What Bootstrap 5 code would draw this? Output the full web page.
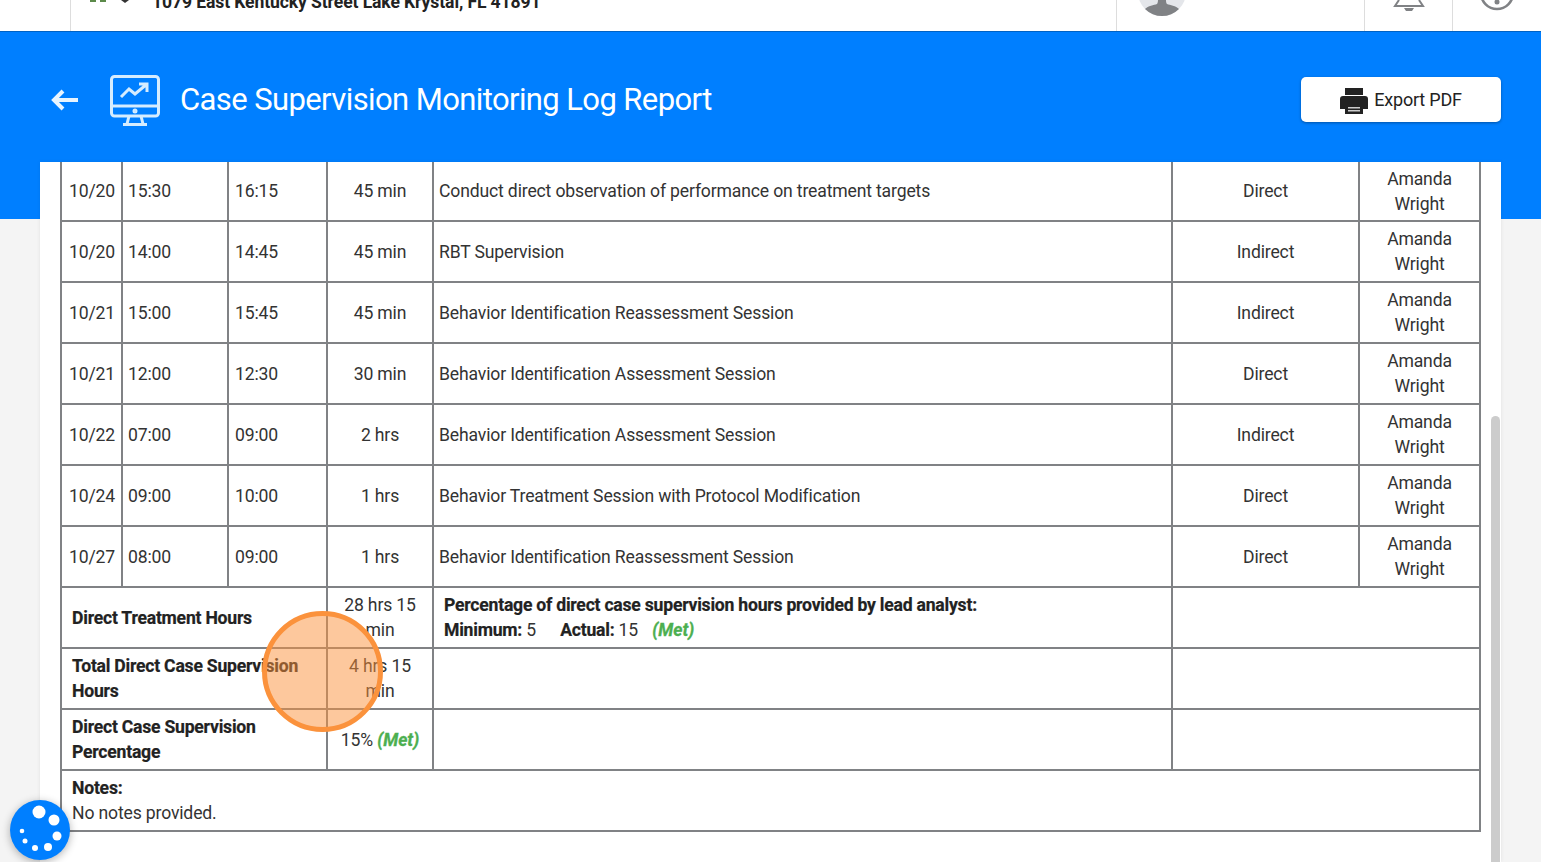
<!DOCTYPE html>
<html lang="en">
<head>
  <meta charset="UTF-8">
  <title>Case Supervision Monitoring Log Report</title>
  <meta name="viewport" content="width=device-width, initial-scale=1">
  <link href="https://cdn.jsdelivr.net/npm/bootstrap@5.3.3/dist/css/bootstrap.min.css" rel="stylesheet">
  <style>
    html, body { height: 862px; overflow: hidden; }
    body { font-family: Roboto, "Liberation Sans", sans-serif; background: #f4f4f4; color: #333; }
    .topbar { height: 32px; background: #fff; border-bottom: 1px solid #0062c4; overflow: hidden; }
    .topcell { height: 31px; border-left: 1px solid #ddd; position: relative; }
    .logo-cell { width: 1046px; margin-left: 70px; }
    .user-cell { width: 248px; }
    .bell-cell { width: 88px; }
    .info-cell { flex: 1; }
    .address { font-size: 17.6px; font-weight: 700; letter-spacing: -.12px; color: #222; margin: -8px 0 0 81px; line-height: 20px; white-space: nowrap; }
    .clip-icon { position: absolute; }
    .headband { height: 130px; background: #007fff; padding: 6px 40px 0 50px; }
    .back-link { margin-right: 30px; }
    .monitor-icon { margin-right: 20px; }
    .report-title { font-size: 31px; font-weight: 400; letter-spacing: -.6px; color: #fff; margin: 0; line-height: 40px; }
    .btn-export { width: 200px; height: 45px; margin-bottom: 2px; gap: 6px; background: #fff; color: #222; font-size: 18px; letter-spacing: -.2px; border: 0; border-radius: 5px; box-shadow: 0 1px 3px rgba(0,0,0,.35); }
    .btn-export:hover { background: #fff; color: #222; }
    .printer-icon { margin-top: 4px; }
    .pagewrap { height: 700px; background: linear-gradient(#007fff 57px, #f4f4f4 57px); padding: 0 40px; }
    .sheet { background: #fff; height: 700px; padding: 0 20px; box-shadow: 0 0 4px rgba(0,0,0,.08); }
    .logtable { width: 1419px; table-layout: fixed; border-collapse: collapse; font-size: 17.6px; line-height: 25px; letter-spacing: -.16px; color: #333; }
    .logtable td { border: 2px solid #808285; padding: 4.5px 5px; vertical-align: middle; }
    .logtable tr:first-child td { border-top: 0; padding-top: 4.5px; padding-bottom: 3.5px; }
    .logtable td.one-line { padding-top: 6.5px; }
    .logtable tr:first-child td.one-line { padding-top: 5.5px; padding-bottom: 4.5px; }
    .logtable td.pad-b { padding-left: 10px; }
    .logtable td.date-cell { padding-left: 7px; padding-right: 0; }
    .logtable td.time-cell { padding-left: 5px; }
    .logtable td.end-cell { padding-left: 6px; }
    .strong-cell { font-weight: 700; letter-spacing: -.23px; color: #222; -webkit-text-stroke: .2px #222; }
    .met-tag { font-weight: 700; font-style: italic; color: #4caf50; -webkit-text-stroke: .3px #4caf50; letter-spacing: 0; }
    .gap-actual { margin-left: 20px; }
    .gap-met { margin-left: 10px; }
    .scroll-thumb { position: fixed; left: 1491px; top: 416px; width: 9px; height: 446px; background: #ccc; border-radius: 5px 5px 0 0; }
    .click-ring { position: fixed; left: 262px; top: 611px; width: 121px; height: 121px; border-radius: 50%; border: 5px solid #fb923c; background: rgba(251,146,60,.5); }
    .cookie-btn { position: fixed; left: 10px; top: 800px; width: 60px; height: 60px; border-radius: 50%; background: #007fff; box-shadow: 0 2px 8px rgba(0,0,0,.3); }
  </style>
</head>
<body>
  <div class="topbar d-flex">
    <div class="topcell logo-cell">
      <svg class="clip-icon" style="left:18px;top:0" width="40" height="4" viewBox="0 0 40 4"><rect x="1" y="0" width="6" height="2" fill="#5c8a4a"/><rect x="11" y="0" width="6" height="2" fill="#5c8a4a"/><path d="M32 0h8l-4 3z" fill="#333"/></svg>
      <div class="address">1079 East Kentucky Street Lake Krystal, FL 41891</div>
    </div>
    <div class="topcell user-cell">
      <svg class="clip-icon" style="left:20px;top:0" width="50" height="17" viewBox="0 0 50 17"><circle cx="25" cy="-8" r="24" fill="#e4e6ea"/><path d="M8 9c3-3 9-4 12-5 1-1 1-4 1-4h8s0 3 1 4c3 1 9 2 12 5a24 24 0 0 1-34 0z" fill="#808285"/></svg>
    </div>
    <div class="topcell bell-cell">
      <svg class="clip-icon" style="left:28px;top:0" width="32" height="12" viewBox="0 0 32 12"><path d="M6 0 2 6h28l-4-6" fill="none" stroke="#808285" stroke-width="2"/><path d="M11 8h10l-2 3h-6z" fill="#808285"/></svg>
    </div>
    <div class="topcell info-cell">
      <svg class="clip-icon" style="left:26px;top:0" width="36" height="12" viewBox="0 0 36 12"><circle cx="18" cy="-7" r="16" fill="none" stroke="#808285" stroke-width="2.6"/><circle cx="18" cy="2" r="2.5" fill="#808285"/></svg>
    </div>
  </div>

  <div class="headband d-flex align-items-center">
    <a href="#" class="d-flex back-link">
      <svg width="30" height="24" viewBox="0 0 30 24"><path d="M13 3 4 12l9 9M4 12h24" fill="none" stroke="#e8f4ff" stroke-width="4"/></svg>
    </a>
    <svg class="monitor-icon" width="50" height="51" viewBox="0 0 50 51" fill="none" stroke="#d5ecff" stroke-width="3">
      <rect x="1.5" y="1.5" width="47" height="39.5" rx="3"/>
      <path d="M1.5 31h47M19 41l-2 8M31 41l2 8M13 49.5h24"/>
      <path d="M11 22l8-8 6 5 12-10M29 9h8v8"/>
      <circle cx="25" cy="36" r="1" fill="#d5ecff"/>
    </svg>
    <h1 class="report-title">Case Supervision Monitoring Log Report</h1>
    <button class="btn btn-export ms-auto d-flex align-items-center justify-content-center">
      <svg class="printer-icon" width="28" height="28" viewBox="0 0 28 28"><path d="M5 1h18v7H5z" fill="#222"/><path d="M3 9h22a3 3 0 0 1 3 3v10h-5v-5H5v5H0V12a3 3 0 0 1 3-3z" fill="#222"/><path d="M5 17h18v10H5z" fill="#222"/><path d="M8 20h12v1.5H8zm0 3h12v1.5H8z" fill="#ccc"/></svg>
      Export PDF
    </button>
  </div>

  <div class="pagewrap">
    <div class="sheet">
      <table class="logtable">
        <colgroup>
          <col style="width:61px"><col style="width:106px"><col style="width:99px"><col style="width:106px"><col style="width:739px"><col style="width:187px"><col style="width:121px">
        </colgroup>
        <tbody id="logBody"></tbody>
      </table>
    </div>
  </div>

  <div class="scroll-thumb"></div>
  <div class="click-ring"></div>
  <div class="cookie-btn">
    <svg width="60" height="60" viewBox="0 0 60 60" fill="#fff">
      <circle cx="29" cy="12" r="6.5"/><circle cx="44" cy="20" r="5.5"/><circle cx="47" cy="36" r="4.5"/><circle cx="38" cy="47" r="4"/><circle cx="25" cy="48" r="3"/><circle cx="15" cy="41" r="2.5"/><circle cx="12" cy="31" r="2.3"/>
    </svg>
  </div>

  <script>
    const rows = [
      ["10/20","15:30","16:15","45 min","Conduct direct observation of performance on treatment targets","Direct"],
      ["10/20","14:00","14:45","45 min","RBT Supervision","Indirect"],
      ["10/21","15:00","15:45","45 min","Behavior Identification Reassessment Session","Indirect"],
      ["10/21","12:00","12:30","30 min","Behavior Identification Assessment Session","Direct"],
      ["10/22","07:00","09:00","2 hrs","Behavior Identification Assessment Session","Indirect"],
      ["10/24","09:00","10:00","1 hrs","Behavior Treatment Session with Protocol Modification","Direct"],
      ["10/27","08:00","09:00","1 hrs","Behavior Identification Reassessment Session","Direct"]
    ];
    let html = "";
    rows.forEach(r => {
      html += `<tr>
        <td class="one-line date-cell">${r[0]}</td><td class="one-line time-cell">${r[1]}</td><td class="one-line end-cell">${r[2]}</td>
        <td class="one-line text-center">${r[3]}</td><td class="one-line">${r[4]}</td>
        <td class="one-line text-center">${r[5]}</td><td class="text-center">Amanda Wright</td></tr>`;
    });
    html += `<tr>
      <td colspan="3" class="one-line strong-cell pad-b">Direct Treatment Hours</td>
      <td class="text-center">28 hrs 15 min</td>
      <td class="pad-b"><span class="strong-cell">Percentage of direct case supervision hours provided by lead analyst:</span><br>
        <span class="strong-cell">Minimum:</span> 5 <span class="strong-cell gap-actual">Actual:</span> 15 <span class="met-tag gap-met">(Met)</span></td>
      <td colspan="2"></td></tr>`;
    html += `<tr>
      <td colspan="3" class="strong-cell pad-b">Total Direct Case Supervision Hours</td>
      <td class="text-center">4 hrs 15 min</td><td></td><td colspan="2"></td></tr>`;
    html += `<tr>
      <td colspan="3" class="strong-cell pad-b">Direct Case Supervision Percentage</td>
      <td class="one-line text-center">15% <span class="met-tag">(Met)</span></td><td></td><td colspan="2"></td></tr>`;
    html += `<tr><td colspan="7" class="pad-b"><span class="strong-cell">Notes:</span><br>No notes provided.</td></tr>`;
    document.getElementById("logBody").innerHTML = html;
  </script>
  <script src="https://cdn.jsdelivr.net/npm/bootstrap@5.3.3/dist/js/bootstrap.bundle.min.js"></script>
</body>
</html>
